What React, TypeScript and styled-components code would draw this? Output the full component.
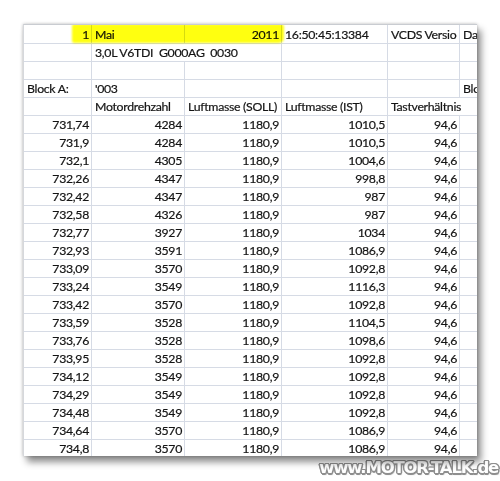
import React from "react";
import styled, { createGlobalStyle } from "styled-components";

const Global = createGlobalStyle`
  html, body { margin: 0; padding: 0; background: #ffffff; }
  body { width: 500px; height: 481px; overflow: hidden; }
`;

const Page = styled.div`
  width: 500px;
  height: 481px;
  padding: 24px 0 0 23px;
  box-sizing: border-box;
  display: flex;
  flex-direction: column;
`;

const Sheet = styled.div`
  position: relative;
  width: 454px;
  height: 432px;
  box-sizing: border-box;
  background: #ffffff;
  border-top: 1px solid #c9ccd1;
  border-left: 1px solid #d6d8dc;
  overflow: hidden;
  box-shadow: 0 0 3px rgba(0, 0, 0, 0.25), 4px 6px 7px rgba(0, 0, 0, 0.45);
  font-family: Lato, "Liberation Sans", sans-serif;
  font-size: 12.3px;
  letter-spacing: -0.3px;
  color: #141414;
  -webkit-text-stroke: 0.2px #141414;
`;

const Grid = styled.div`
  display: grid;
  grid-template-columns: 68px 93px 97px 106px 72px 64px;
  width: 500px;
`;

const Cell = styled.div<{ $align?: "left" | "right"; $span?: number; $first?: boolean }>`
  box-sizing: border-box;
  height: ${(p) => (p.$first ? 19 : 18)}px;
  padding: ${(p) => (p.$first ? "1.5px" : "0.5px")} 2px 0 3px;
  border-right: 1px solid #d6dbe5;
  border-bottom: 1px solid #d6dbe5;
  line-height: 16px;
  white-space: pre;
  overflow: hidden;
  text-align: ${(p) => p.$align ?? "left"};
  grid-column: span ${(p) => p.$span ?? 1};
`;

const Highlight = styled.div`
  position: absolute;
  left: 48px;
  top: -1px;
  width: 212px;
  height: 19px;
  background: #ffff10;
  mix-blend-mode: multiply;
  filter: blur(0.8px);
  border-radius: 2px 3px 5px 2px;
  pointer-events: none;
`;

const Footer = styled.div`
  width: 477px;
  display: flex;
  justify-content: flex-end;
  padding-top: 2px;
`;

const Watermark = styled.div`
  font-family: "DejaVu Sans", "Liberation Sans", sans-serif;
  font-weight: 700;
  font-size: 16.5px;
  line-height: 19px;
  letter-spacing: -1.2px;
  color: #ffffff;
  margin-right: 2px;
  white-space: nowrap;
  text-shadow:
    -1px -1px 0 #8f8f8f, 1px -1px 0 #8f8f8f, -1px 1px 0 #8f8f8f, 1px 1px 0 #8f8f8f,
    0 -1.5px 0 #8f8f8f, 0 1.5px 0 #8f8f8f, -1.5px 0 0 #8f8f8f, 1.5px 0 0 #8f8f8f,
    1px 2px 1px #b0b0b0;
`;

type C = { t: string; a?: "left" | "right"; s?: number };

const header: C[][] = [
  [{ t: "1", a: "right" }, { t: "Mai" }, { t: "2011", a: "right" }, { t: "16:50:45:13384" }, { t: "VCDS Versio" }, { t: "Da" }],
  [{ t: "" }, { t: "3,0L V6TDI  G000AG  0030", s: 2 }, { t: "" }, { t: "" }, { t: "" }],
  [{ t: "" }, { t: "" }, { t: "" }, { t: "" }, { t: "" }, { t: "" }],
  [{ t: "Block A:" }, { t: "'003" }, { t: "" }, { t: "" }, { t: "" }, { t: "Blo" }],
  [{ t: "" }, { t: "Motordrehzahl" }, { t: "Luftmasse (SOLL)" }, { t: "Luftmasse (IST)" }, { t: "Tastverhältnis", s: 2 }],
];

const data: string[][] = [
  ["731,74", "4284", "1180,9", "1010,5", "94,6"],
  ["731,9", "4284", "1180,9", "1010,5", "94,6"],
  ["732,1", "4305", "1180,9", "1004,6", "94,6"],
  ["732,26", "4347", "1180,9", "998,8", "94,6"],
  ["732,42", "4347", "1180,9", "987", "94,6"],
  ["732,58", "4326", "1180,9", "987", "94,6"],
  ["732,77", "3927", "1180,9", "1034", "94,6"],
  ["732,93", "3591", "1180,9", "1086,9", "94,6"],
  ["733,09", "3570", "1180,9", "1092,8", "94,6"],
  ["733,24", "3549", "1180,9", "1116,3", "94,6"],
  ["733,42", "3570", "1180,9", "1092,8", "94,6"],
  ["733,59", "3528", "1180,9", "1104,5", "94,6"],
  ["733,76", "3528", "1180,9", "1098,6", "94,6"],
  ["733,95", "3528", "1180,9", "1092,8", "94,6"],
  ["734,12", "3549", "1180,9", "1092,8", "94,6"],
  ["734,29", "3549", "1180,9", "1092,8", "94,6"],
  ["734,48", "3549", "1180,9", "1092,8", "94,6"],
  ["734,64", "3570", "1180,9", "1086,9", "94,6"],
  ["734,8", "3570", "1180,9", "1086,9", "94,6"],
];

export default function App() {
  return (
    <>
      <Global />
      <Page>
        <Sheet>
          <Grid>
            {header.map((row, ri) =>
              row.map((c, ci) => (
                <Cell key={`h${ri}-${ci}`} $align={c.a} $span={c.s} $first={ri === 0}>
                  {c.t}
                </Cell>
              ))
            )}
            {data.map((row, ri) => (
              <React.Fragment key={`d${ri}`}>
                {row.map((v, ci) => (
                  <Cell key={ci} $align="right">
                    {v}
                  </Cell>
                ))}
                <Cell />
              </React.Fragment>
            ))}
          </Grid>
          <Highlight />
        </Sheet>
        <Footer>
          <Watermark>www.MOTOR-TALK.de</Watermark>
        </Footer>
      </Page>
    </>
  );
}
